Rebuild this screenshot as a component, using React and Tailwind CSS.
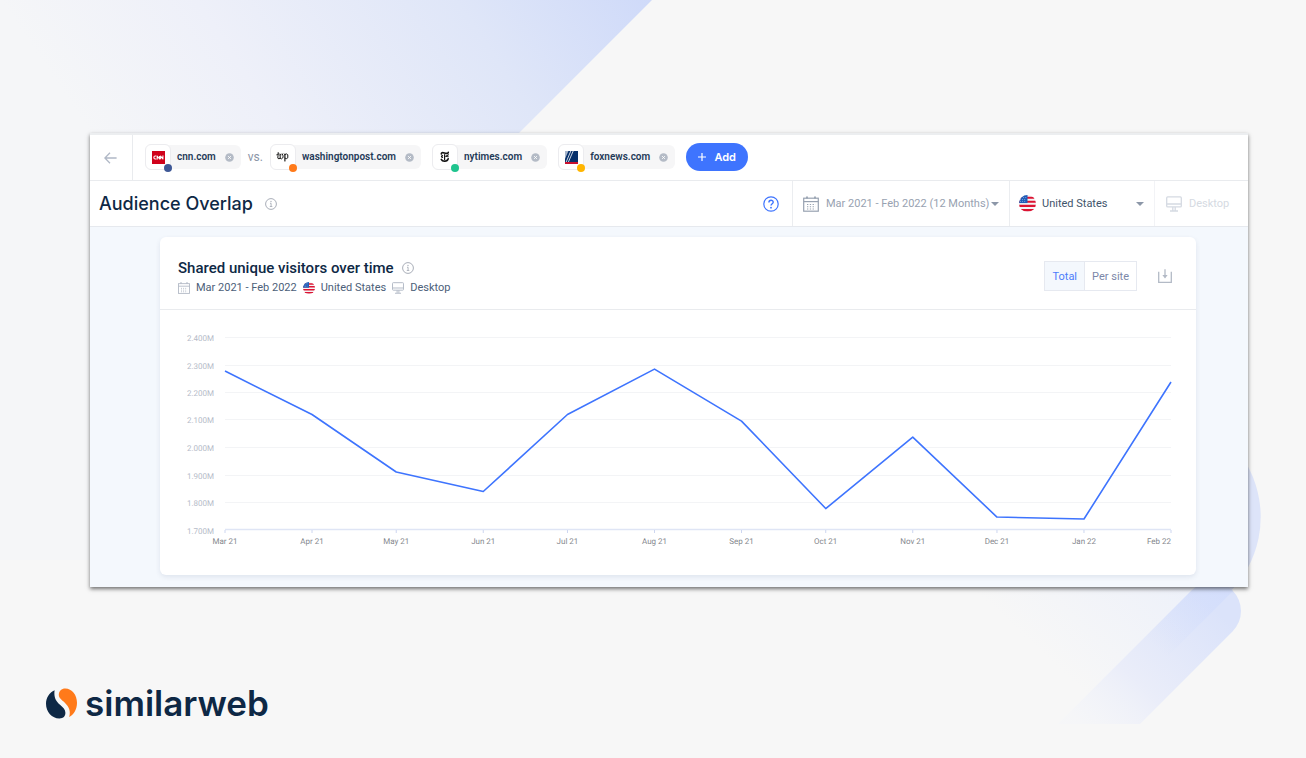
import React from "react";

const SITES = [
  { name: "cnn.com", dot: "bg-[#3e5896]", icon: CnnIcon },
  { name: "washingtonpost.com", dot: "bg-[#ff7a1a]", icon: WapoIcon },
  { name: "nytimes.com", dot: "bg-[#1fc48e]", icon: NytIcon },
  { name: "foxnews.com", dot: "bg-[#ffb500]", icon: FoxIcon },
];

const SERIES = [
  { label: "Mar 21", day: 0, value: 2.278 },
  { label: "Apr 21", day: 31, value: 2.12 },
  { label: "May 21", day: 61, value: 1.911 },
  { label: "Jun 21", day: 92, value: 1.84 },
  { label: "Jul 21", day: 122, value: 2.12 },
  { label: "Aug 21", day: 153, value: 2.285 },
  { label: "Sep 21", day: 184, value: 2.096 },
  { label: "Oct 21", day: 214, value: 1.778 },
  { label: "Nov 21", day: 245, value: 2.038 },
  { label: "Dec 21", day: 275, value: 1.747 },
  { label: "Jan 22", day: 306, value: 1.74 },
  { label: "Feb 22", day: 337, value: 2.238 },
];

const TICKS = [2.4, 2.3, 2.2, 2.1, 2.0, 1.9, 1.8, 1.7];

function CnnIcon() {
  return (
    <svg viewBox="0 0 13 13" className="size-[13px]" aria-hidden="true">
      <rect width="13" height="13" fill="#d0021b" />
      <g fill="none" stroke="#fff" strokeWidth="1.1" strokeLinejoin="round">
        <path d="M4.4 5H3.2C1.4 5 1.4 8 3.2 8h1.2" />
        <path d="M5.2 8.4V5L7.6 8V5" />
        <path d="M8.6 8.2V5l2.3 3V4.6" />
      </g>
    </svg>
  );
}

function WapoIcon() {
  return (
    <svg viewBox="0 0 13 12" className="w-[13px] h-3" aria-hidden="true">
      <g fill="none" stroke="#1b1b1b" strokeLinecap="round" strokeLinejoin="round">
        <path strokeWidth="1" d="M2.2 1.6 1.8 7.200l1.200.7 1.200-.8V3.400M4.200 7.200l1.200.7 1.300-.9c.6-1.200.5-2.400-.2-3.600" />
        <path strokeWidth=".8" d="M.6 3.800 3 2.800M3.600 4l1.400-1M5.800 3.600l1.200-.8" />
        <path strokeWidth="1.2" d="M8.900 3.200v6.800" />
        <path strokeWidth="1" d="M8.900 3.600 10.400 2.900l1.400.9v3l-1.500.9-1.200-.6" />
      </g>
    </svg>
  );
}

function NytIcon() {
  return (
    <svg viewBox="0 0 10 12" className="w-[10px] h-3" aria-hidden="true">
      <g fill="none" stroke="#141414" strokeLinecap="round">
        <path strokeWidth="1.6" d="M1.400 3C1 1.400 2.800 1.400 4.400 2S8.200 2.600 8.300 1.400" />
        <path strokeWidth="1.100" d="M2.600 4.600C1 5 1 6.200 2.600 6.400M8.400 3.800 6 5.200l2.200.6" />
        <path strokeWidth="1.200" d="M4.600 3.600v5.200" />
        <path strokeWidth="1.600" d="M1.300 8.400c1.200 2.600 6 2.400 6.900-.7" />
      </g>
    </svg>
  );
}

function FoxIcon() {
  return (
    <svg viewBox="0 0 13 13" className="size-[13px]" aria-hidden="true">
      <rect width="13" height="13" fill="#06306b" />
      <rect y="11" width="13" height="2" fill="#c8102e" />
      <path d="M0 0h3.400L0 8z" fill="#fff" opacity=".65" />
      <path d="M5.800 0 1.200 11M8.200 0 3.400 11" stroke="#fff" strokeWidth=".8" />
    </svg>
  );
}

function Flag({ className }) {
  return (
    <svg viewBox="0 0 16 16" className={className} aria-hidden="true">
      <clipPath id="flag-round">
        <circle cx="8" cy="8" r="8" />
      </clipPath>
      <g clipPath="url(#flag-round)">
        <rect width="16" height="16" fill="#f4f4f6" />
        <path
          d="M0 2.600h16M0 6.400h16M0 10.200h16M0 14.200h16"
          stroke="#dc1432"
          strokeWidth="2"
        />
        <rect width="8" height="7.600" fill="#1d5cb8" />
        <path
          d="M2 2.400h5M1 4.200h6M1 6h6"
          stroke="#b8cdee"
          strokeWidth=".7"
          strokeDasharray=".8 1.2"
        />
      </g>
    </svg>
  );
}

function InfoIcon() {
  return (
    <svg viewBox="0 0 12 12" className="size-3" fill="none" stroke="#a9aeb8" aria-hidden="true">
      <circle cx="6" cy="6" r="5.4" />
      <path d="M5 5.3h1.1v3M4.8 8.5h2.5" strokeWidth=".9" />
      <circle cx="6" cy="3.5" r=".65" fill="#a9aeb8" stroke="none" />
    </svg>
  );
}

function CalendarIcon({ className }) {
  return (
    <svg viewBox="0 0 16 16" className={className} fill="none" stroke="currentColor" aria-hidden="true">
      <rect x=".7" y="2.2" width="14.6" height="13" strokeWidth="1.2" />
      <path d="M.7 5.6h14.6" strokeWidth="1.2" />
      <path d="M4 .4v2M12 .4v2" strokeWidth="1.8" />
      <path d="M4 8.500h8.500M4 10.800h8.500M4 13h8.500" strokeWidth="1.100" strokeDasharray="1.300 1.500" />
    </svg>
  );
}

function DesktopIcon({ className }) {
  return (
    <svg viewBox="0 0 16 16" className={className} fill="none" stroke="currentColor" strokeWidth="1.3" aria-hidden="true">
      <rect x=".7" y=".9" width="14.6" height="10" rx="1" />
      <path d="M.7 8h14.6M6.8 11v3.6M9.2 11v3.6M4 15h8" />
    </svg>
  );
}

function Caret() {
  return (
    <svg viewBox="0 0 8 4" className="w-2 h-1 shrink-0 pointer-events-none" aria-hidden="true">
      <path d="M0 0h8L4 4z" fill="#8c97a8" />
    </svg>
  );
}

function SiteChip({ site }) {
  const Icon = site.icon;
  return (
    <div className="flex h-6 items-center rounded-md bg-[#f6f6f7] pr-[7px]">
      <div className="relative flex size-[26px] shrink-0 items-center justify-center rounded-md border border-[#ececef] bg-white">
        <Icon />
        <span className={`absolute -bottom-[3px] -right-0.5 size-2 rounded-full ${site.dot}`} />
      </div>
      <span className="pl-1.5 text-[10px] leading-4 font-semibold text-[#1f3a57]">{site.name}</span>
      <button type="button" aria-label={`Remove ${site.name}`} className="ml-[9px] flex size-[9px] items-center">
        <svg viewBox="0 0 9 9" className="size-[9px]" aria-hidden="true">
          <circle cx="4.5" cy="4.5" r="4.3" fill="#b4bbc6" />
          <path d="m3.2 3.2 2.6 2.6m0-2.600L3.200 5.800" stroke="#fff" strokeWidth="1" />
        </svg>
      </button>
    </div>
  );
}

function TopBar() {
  return (
    <nav className="flex h-[46px] items-stretch border-b border-[#e9ebee]">
      <button
        type="button"
        aria-label="Back"
        className="flex w-[43px] items-center justify-center border-r border-[#e9ebee] pr-0.5"
      >
        <svg viewBox="0 0 13 12" className="w-[13px] h-3" fill="none" stroke="#b0b8c6" strokeWidth="1.3" aria-hidden="true">
          <path d="M12.6 6H1M6 .8.9 6 6 11.2" />
        </svg>
      </button>
      <div className="flex items-center gap-[11px] pb-px pl-3">
        <div className="flex items-center gap-[7px]">
          <SiteChip site={SITES[0]} />
          <span className="text-xs text-[#8b95a7]">vs.</span>
          <SiteChip site={SITES[1]} />
        </div>
        <SiteChip site={SITES[2]} />
        <SiteChip site={SITES[3]} />
        <button
          type="button"
          className="flex h-7 w-[62px] items-center justify-center gap-2 rounded-full bg-[#3e74fe] font-[Inter,sans-serif] text-[11px] font-semibold text-white"
        >
          <svg viewBox="0 0 8 8" className="size-2" stroke="#fff" strokeWidth="1.2" aria-hidden="true">
            <path d="M4 0v8M0 4h8" />
          </svg>
          Add
        </button>
      </div>
    </nav>
  );
}

function FilterBar() {
  return (
    <div className="flex h-[46px] items-stretch border-b border-[#e6e9ee] text-[11px]">
      <div className="flex flex-1 items-center gap-3 pl-[9px]">
        <h1 className="font-[Inter,sans-serif] text-lg font-medium text-[#0e2845]">Audience Overlap</h1>
        <InfoIcon />
      </div>
      <button type="button" aria-label="Help" className="flex items-center px-[13px]">
        <svg viewBox="0 0 16 16" className="size-4" fill="none" stroke="#3e74fe" strokeWidth="1.2" aria-hidden="true">
          <circle cx="8" cy="8" r="7.2" />
          <path d="M5.900 6.500c0-3 4.300-2.800 4.300-.3C10.200 7.800 8 7.800 8 9.600" strokeWidth="1.400" />
          <circle cx="8" cy="11.700" r=".9" fill="#3e74fe" stroke="none" />
        </svg>
      </button>
      <label className="flex w-[217px] items-center border-l border-[#ebedf0] pl-[10px] pr-[10px] text-[#98a2b1]">
        <CalendarIcon className="size-4 shrink-0" />
        <select aria-label="Date range" className="ml-[7px] min-w-0 flex-1 appearance-none bg-transparent pt-0.5">
          <option>Mar 2021 - Feb 2022 (12 Months)</option>
        </select>
        <Caret />
      </label>
      <label className="flex w-[145px] items-center border-l border-[#ebedf0] pl-[9px] pr-[10px] text-[#3f546b]">
        <Flag className="size-[17px] shrink-0" />
        <select aria-label="Country" className="ml-1.5 flex-1 appearance-none bg-transparent pt-0.5">
          <option>United States</option>
        </select>
        <Caret />
      </label>
      <label className="flex w-[94px] items-center border-l border-[#f2f3f6] pl-[11px] text-[#d5dae2]">
        <DesktopIcon className="size-4 shrink-0" />
        <select aria-label="Device" disabled className="ml-[7px] flex-1 appearance-none bg-transparent pt-0.5 opacity-100">
          <option>Desktop</option>
        </select>
      </label>
    </div>
  );
}

function CardHeader() {
  return (
    <header className="flex h-[73px] items-center justify-between border-b border-[#e9ebee] pl-[18px] pr-6">
      <div className="pt-[10px]">
        <div className="flex items-center gap-2">
          <h2 className="text-[15px] leading-5 font-medium text-[#0e2845]">Shared unique visitors over time</h2>
          <InfoIcon />
        </div>
        <div className="flex items-center gap-1.5 text-[11px] leading-5 text-[#4c6079]">
          <CalendarIcon className="size-3 text-[#b3bac6]" />
          <span>Mar 2021 - Feb 2022</span>
          <Flag className="size-3" />
          <span>United States</span>
          <DesktopIcon className="size-3 text-[#b3bac6]" />
          <span>Desktop</span>
        </div>
      </div>
      <div className="flex items-center gap-[21px] pt-1.5">
        <div className="flex h-[30px] border border-[#e6e9f0] text-[11px]">
          <button type="button" aria-pressed="true" className="border-r border-[#e6e9f0] bg-[#f4f8fd] px-[7px] pt-0.5 text-[#4c7dfb]">
            Total
          </button>
          <button type="button" aria-pressed="false" className="px-[7px] pt-0.5 text-[#7b87a8]">
            Per site
          </button>
        </div>
        <button type="button" aria-label="Download">
          <svg viewBox="0 0 14 14" className="size-[14px]" fill="none" stroke="#b3bac6" strokeWidth="1.3" aria-hidden="true">
            <path d="M.7 2.800v10.500h12.600V2.800M7 .2v8" />
            <path d="M4.400 6h5.200L7 9.600z" fill="#b3bac6" stroke="none" />
          </svg>
        </button>
      </div>
    </header>
  );
}

function Chart() {
  const x = (day) => 65 + (day / 337) * 946;
  const y = (value) => 220 - ((value - 1.7) / 0.7) * 192.5;
  const points = SERIES.map((p) => `${x(p.day)},${y(p.value)}`).join(" ");
  return (
    <svg viewBox="0 0 1036 265" className="block w-full text-[8px] [text-rendering:geometricPrecision]" role="img" aria-label="Shared unique visitors over time">
      {TICKS.map((t) => (
        <g key={t}>
          {t > 1.7 && (
            <line x1="65" x2="1011" y1={Math.floor(y(t)) + 0.5} y2={Math.floor(y(t)) + 0.5} stroke="#f3f4f6" />
          )}
          <text x="54" y={Math.floor(y(t)) + 4} textAnchor="end" fill="#b5bbc8">
            {t.toFixed(3)}M
          </text>
        </g>
      ))}
      <path d="M65 219.500h946" stroke="#dfe5f5" strokeWidth="1.500" />
      {SERIES.map((p, i) => (
        <g key={p.label}>
          <line x1={x(p.day)} x2={x(p.day)} y1="220" y2="223" stroke="#cdd6f0" />
          <text
            x={x(p.day)}
            y="234"
            textAnchor={i === SERIES.length - 1 ? "end" : "middle"}
            fill="#85888e"
          >
            {p.label}
          </text>
        </g>
      ))}
      <polyline points={points} fill="none" stroke="#3e74fe" strokeWidth="1.600" strokeLinejoin="round" />
    </svg>
  );
}

function Backdrop() {
  return (
    <svg
      viewBox="0 0 1306 758"
      preserveAspectRatio="xMidYMid slice"
      className="absolute inset-0 -z-10 h-full w-full"
      aria-hidden="true"
    >
      <defs>
        <linearGradient id="sweep" gradientUnits="userSpaceOnUse" x1="0" y1="0" x2="448" y2="-302">
          <stop offset="0" stopColor="#f5f6f8" />
          <stop offset=".3" stopColor="#eef0f9" />
          <stop offset=".7" stopColor="#dfe6f8" />
          <stop offset="1" stopColor="#cfdaf9" />
        </linearGradient>
        <linearGradient id="haze" gradientUnits="userSpaceOnUse" x1="1060" y1="670" x2="1180" y2="540">
          <stop offset="0" stopColor="#e9eefb" stopOpacity="0" />
          <stop offset="1" stopColor="#e9eefb" stopOpacity=".8" />
        </linearGradient>
        <linearGradient id="band" gradientUnits="userSpaceOnUse" x1="1090" y1="735" x2="1211" y2="605">
          <stop offset="0" stopColor="#f2f4fa" stopOpacity=".3" />
          <stop offset=".4" stopColor="#eaedf9" />
          <stop offset="1" stopColor="#dbe3fa" />
        </linearGradient>
        <linearGradient id="shade" gradientUnits="userSpaceOnUse" x1="1160" y1="650" x2="1220" y2="590">
          <stop offset="0" stopColor="#cfdbfd" stopOpacity="0" />
          <stop offset="1" stopColor="#cfdbfd" stopOpacity=".6" />
        </linearGradient>
        <clipPath id="band-end">
          <rect x="1000" y="500" width="306" height="224" />
        </clipPath>
        <clipPath id="above">
          <path d="M1000 500H1306L1241 583 1100 724H1000z" />
        </clipPath>
      </defs>
      <path d="M0 0H652L460 192V560L0 560z" fill="url(#sweep)" />
      <path d="M900 560H1225L1061 724H900z" fill="url(#haze)" />
      <path d="M1154 410a107 107 0 0 1 75 183z" fill="#dde4f9" />
      <g clipPath="url(#band-end)" strokeLinecap="round" strokeWidth="58" fill="none">
        <path d="M1050 773 1212 611" stroke="url(#band)" />
        <path d="M1050 773 1212 611" stroke="url(#shade)" clipPath="url(#above)" />
      </g>
    </svg>
  );
}

function Logo() {
  return (
    <div className="flex items-center gap-2 text-[#0e2845]">
      <svg viewBox="0 0 31 30" className="w-[31px] h-[31px]" aria-hidden="true">
        <path
          d="M8.600 1.800C3.200 4.300 0 9.400 0 15.300 0 23.400 6 30 13.400 30c4 0 6-2.300 6-5.700 0-3.200-2.300-5.300-5.400-8C10 12.800 7.600 9 8.600 1.800z"
          fill="#0e2845"
        />
        <path
          d="M12.800 6.300C12.800 2.500 15.500 0 19.300 0 26 0 31 6.600 31 14.200c0 6.500-3.200 11.900-7.800 14.400 1.600-5.800.2-9.800-4.400-14.400-3.200-3-6-4.500-6-7.900z"
          fill="#ff7a1a"
        />
      </svg>
      <span className="font-[Inter,sans-serif] text-[35px] leading-9 font-semibold">similarweb</span>
    </div>
  );
}

export default function App() {
  return (
    <main className="relative isolate flex min-h-screen flex-col overflow-hidden bg-[#f7f7f7] pt-[133px] font-[Roboto,sans-serif]">
      <Backdrop />
      <section className="ml-[90px] mr-[58px] border-t-2 border-[#eceef0] bg-white shadow-[0_2px_4px_rgba(0,0,0,0.55)]">
        <TopBar />
        <FilterBar />
        <div className="bg-[#f4f8fd] pt-[10px] pb-3 pl-[70px] pr-[52px]">
          <article className="rounded-md bg-white shadow-[0_2px_5px_rgba(40,60,110,0.1)]">
            <CardHeader />
            <Chart />
          </article>
        </div>
      </section>
      <footer className="pt-[98px] pl-[46px]">
        <Logo />
      </footer>
    </main>
  );
}
